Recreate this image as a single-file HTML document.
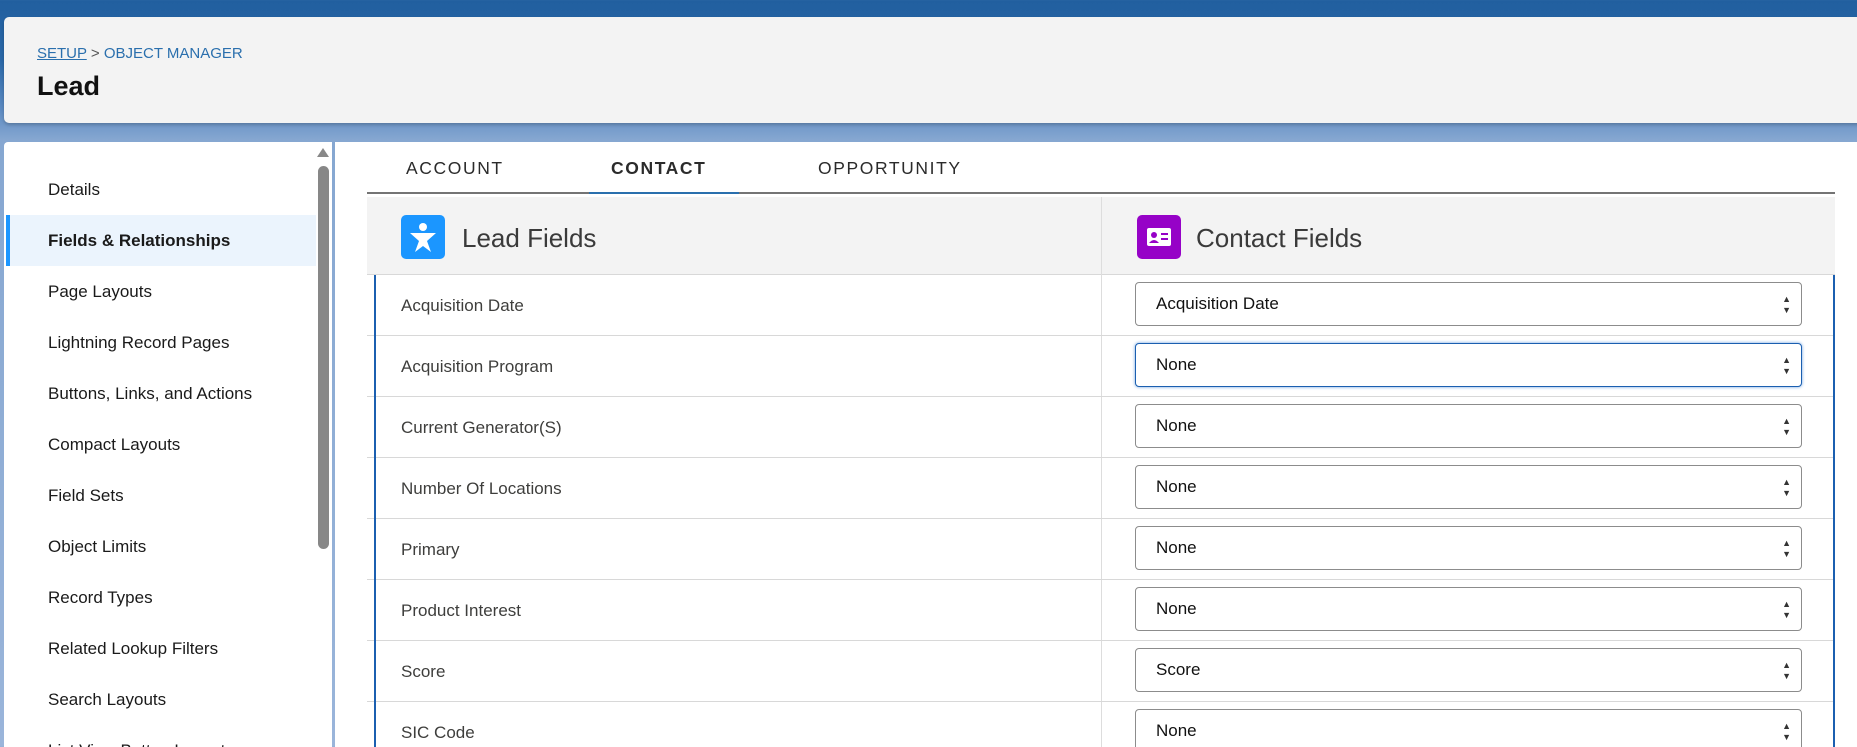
<!DOCTYPE html>
<html><head><meta charset="utf-8"><style>
*{margin:0;padding:0;box-sizing:border-box}
html,body{width:1857px;height:747px;overflow:hidden}
body{font-family:"Liberation Sans",sans-serif;background:linear-gradient(180deg,#215f9f 0,#2a68a8 60px,#5d8bc2 110px,#86a7d1 140px,#9ab5da 747px);position:relative}
.hdr{position:absolute;left:4px;top:17px;width:1860px;height:106px;background:#f3f3f3;border-radius:5px;box-shadow:0 2px 3px rgba(0,0,0,.2)}
.bc{position:absolute;left:33px;top:28px;font-size:15px;color:#2a6fad}
.bc u{color:#2a6fad}
.bc span{color:#555}
.title{position:absolute;left:33px;top:54px;font-size:27px;font-weight:bold;color:#111}
.left{position:absolute;left:4px;top:142px;width:328px;height:605px;background:#fff;border-radius:4px 0 0 0;overflow:hidden}
.nav div{position:absolute;left:44px;font-size:17px;color:#1a1a1a;height:51px;line-height:51px}
.sel{position:absolute;left:2px;top:73px;width:310px;height:51px;background:#ebf4fd;border-left:4px solid #1b96ff}
.sb{position:absolute;left:318px;top:166px;width:11px;height:383px;background:#878787;border-radius:6px}
.sbup{position:absolute;left:317px;top:148px;width:0;height:0;border-left:6px solid transparent;border-right:6px solid transparent;border-bottom:9px solid #888}
.right{position:absolute;left:335px;top:142px;width:1522px;height:605px;background:#fff}
.tab{position:absolute;top:158px;font-size:17.5px;letter-spacing:1.6px;color:#2b2b2b}
.tline{position:absolute;left:367px;top:192px;width:1468px;height:2px;background:#747474}
.tact{position:absolute;left:589px;top:192px;width:150px;height:2px;background:#2a6fad}
.th{position:absolute;left:367px;top:197px;width:1468px;height:78px;background:#f3f3f3;border-bottom:1px solid #d8d8d8}
.th .t{position:absolute;top:26px;font-size:26px;color:#3a3a3a}
.ic{position:absolute;top:18px;width:44px;height:44px;border-radius:5px}
.vd{position:absolute;left:1101px;top:197px;width:1px;height:550px;background:#ddd}
.row{position:absolute;left:367px;width:1468px;height:61px;border-bottom:1px solid #d8d8d8}
.row .l{position:absolute;left:34px;top:0;line-height:61px;font-size:17px;color:#3e3e3c}
.row .s{position:absolute;left:768px;top:7px;width:667px;height:44px;border:1px solid #8c8c8c;border-radius:4px;background:#fff}
.row .s span{position:absolute;left:20px;line-height:42px;font-size:17px;color:#111}
.row .s i{position:absolute;right:10px;top:11px;font-style:normal;font-size:9px;line-height:11px;color:#333}
.foc{border-color:#1b5fb0!important;box-shadow:0 0 3px #6aa0e0}
.bl{position:absolute;left:374px;top:275px;width:2px;height:472px;background:#1b5fb0}
.br{position:absolute;left:1833px;top:275px;width:2px;height:472px;background:#1b5fb0}
</style></head><body>
<div class="hdr"><div class="bc"><u>SETUP</u> <span>&gt;</span> OBJECT MANAGER</div><div class="title">Lead</div></div>
<div class="left">
<div class="sel"></div>
<div class="nav">
<div style="top:22px">Details</div>
<div style="top:73px;font-weight:bold">Fields &amp; Relationships</div>
<div style="top:124px">Page Layouts</div>
<div style="top:175px">Lightning Record Pages</div>
<div style="top:226px">Buttons, Links, and Actions</div>
<div style="top:277px">Compact Layouts</div>
<div style="top:328px">Field Sets</div>
<div style="top:379px">Object Limits</div>
<div style="top:430px">Record Types</div>
<div style="top:481px">Related Lookup Filters</div>
<div style="top:532px">Search Layouts</div>
<div style="top:583px">List View Button Layout</div>
</div>
</div>
<div class="sbup"></div><div class="sb"></div>
<div class="right"></div>
<div class="tab" style="left:406px">ACCOUNT</div>
<div class="tab" style="left:611px;font-weight:bold">CONTACT</div>
<div class="tab" style="left:818px">OPPORTUNITY</div>
<div class="tline"></div><div class="tact"></div>
<div class="th">
<div class="ic" style="left:34px;background:#1b96ff"><svg width="44" height="44" viewBox="0 0 44 44"><circle cx="22" cy="12" r="4" fill="#fff"/><path d="M9 18 L35 18 L26 26 L30 37 L22 31 L14 37 L18 26 Z" fill="#fff"/></svg></div>
<div class="t" style="left:95px">Lead Fields</div>
<div class="ic" style="left:770px;background:#9602c7"><svg width="44" height="44" viewBox="0 0 44 44"><rect x="10" y="13" width="24" height="18" rx="2" fill="#fff"/><circle cx="17" cy="20" r="3" fill="#9602c7"/><path d="M12 28 Q17 22 22 28Z" fill="#9602c7"/><rect x="24" y="18" width="7" height="2" fill="#9602c7"/><rect x="24" y="23" width="7" height="2" fill="#9602c7"/></svg></div>
<div class="t" style="left:829px">Contact Fields</div>
</div>
<div class="vd"></div>
<div class="row" style="top:275px"><div class="l">Acquisition Date</div><div class="s"><span>Acquisition Date</span><i>▲<br>▼</i></div></div>
<div class="row" style="top:336px"><div class="l">Acquisition Program</div><div class="s foc"><span>None</span><i>▲<br>▼</i></div></div>
<div class="row" style="top:397px"><div class="l">Current Generator(S)</div><div class="s"><span>None</span><i>▲<br>▼</i></div></div>
<div class="row" style="top:458px"><div class="l">Number Of Locations</div><div class="s"><span>None</span><i>▲<br>▼</i></div></div>
<div class="row" style="top:519px"><div class="l">Primary</div><div class="s"><span>None</span><i>▲<br>▼</i></div></div>
<div class="row" style="top:580px"><div class="l">Product Interest</div><div class="s"><span>None</span><i>▲<br>▼</i></div></div>
<div class="row" style="top:641px"><div class="l">Score</div><div class="s"><span>Score</span><i>▲<br>▼</i></div></div>
<div class="row" style="top:702px"><div class="l">SIC Code</div><div class="s"><span>None</span><i>▲<br>▼</i></div></div>
<div class="bl"></div><div class="br"></div>
</body></html>
